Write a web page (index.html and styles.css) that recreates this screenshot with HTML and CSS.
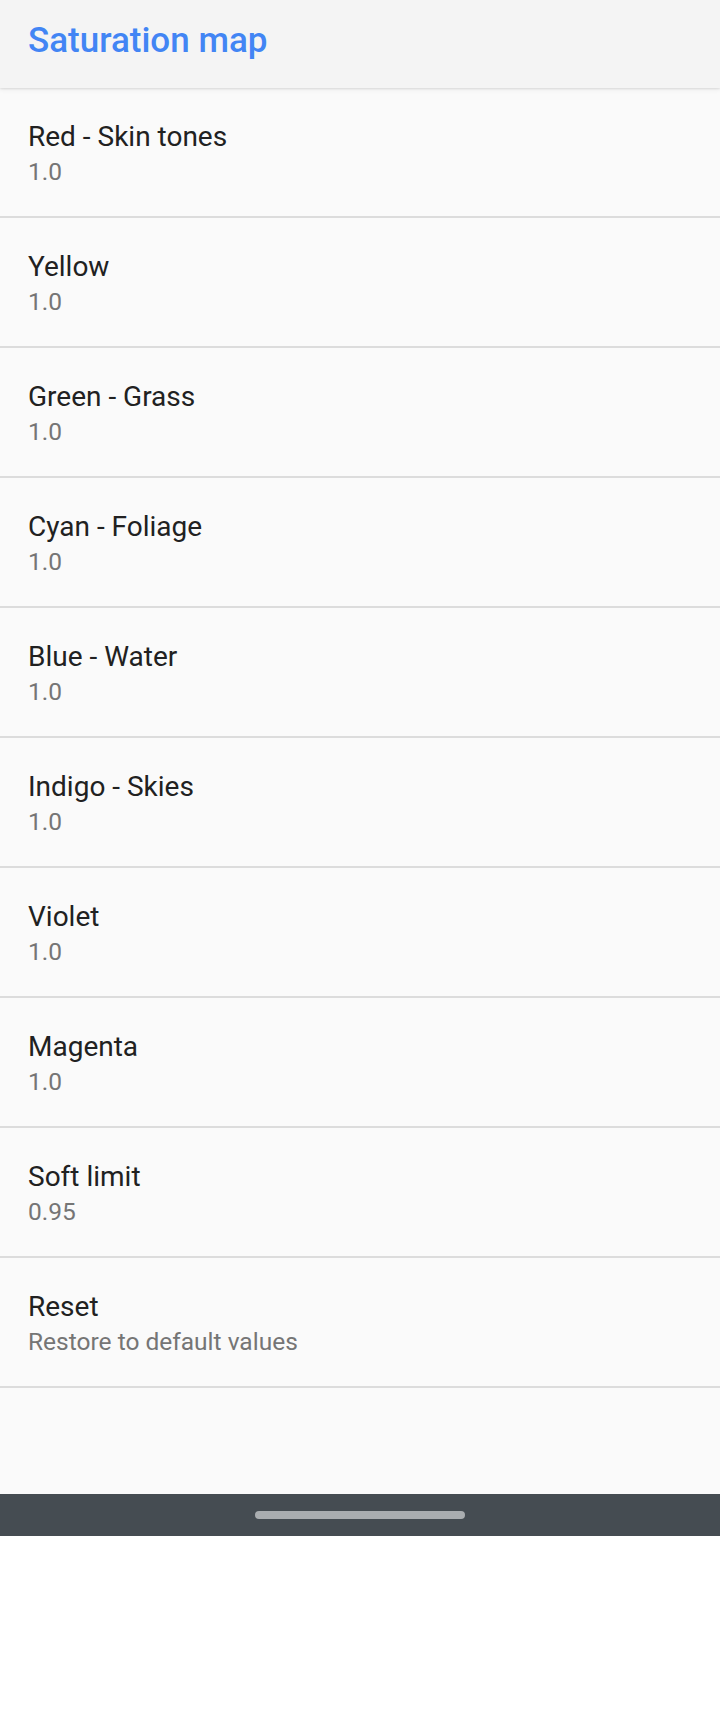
FILE: index.html
```html
<!DOCTYPE html>
<html>
<head>
<meta charset="utf-8">
<link rel="stylesheet" href="styles.css">
</head>
<body>
<div class="screen">
  <header class="appbar"><h1 class="appbar-title">Saturation map</h1></header>
  <main class="list">
    <div class="pref"><div class="pref-title">Red - Skin tones</div><div class="pref-summary">1.0</div></div>
    <div class="pref"><div class="pref-title">Yellow</div><div class="pref-summary">1.0</div></div>
    <div class="pref"><div class="pref-title">Green - Grass</div><div class="pref-summary">1.0</div></div>
    <div class="pref"><div class="pref-title">Cyan - Foliage</div><div class="pref-summary">1.0</div></div>
    <div class="pref"><div class="pref-title">Blue - Water</div><div class="pref-summary">1.0</div></div>
    <div class="pref"><div class="pref-title">Indigo - Skies</div><div class="pref-summary">1.0</div></div>
    <div class="pref"><div class="pref-title">Violet</div><div class="pref-summary">1.0</div></div>
    <div class="pref"><div class="pref-title">Magenta</div><div class="pref-summary">1.0</div></div>
    <div class="pref"><div class="pref-title">Soft limit</div><div class="pref-summary">0.95</div></div>
    <div class="pref"><div class="pref-title">Reset</div><div class="pref-summary">Restore to default values</div></div>
  </main>
  <nav class="navbar"><div class="nav-handle"></div></nav>
</div>
</body>
</html>
```
FILE: styles.css
```css
html, body {
  margin: 0;
  padding: 0;
  background: #ffffff;
}
body {
  width: 720px;
  height: 1712px;
  font-family: Roboto, "Noto Sans", sans-serif;
}
.screen {
  display: flex;
  flex-direction: column;
  height: 1536px;
  background: #fafafa;
}
.appbar {
  position: relative;
  z-index: 1;
  height: 88px;
  box-sizing: border-box;
  flex: none;
  background: #f4f4f4;
  padding: 20px 28px 0;
  box-shadow: 0 1px 2px rgba(0,0,0,0.10), 0 2px 5px rgba(0,0,0,0.05);
}
.appbar-title {
  margin: 0;
  font-size: 35px;
  line-height: 41px;
  font-weight: 500;
  color: #4285f4;
}
.list {
  flex: 1;
  display: flex;
  flex-direction: column;
}
.pref {
  height: 130px;
  box-sizing: border-box;
  padding: 30px 28px 0;
  border-bottom: 2px solid #dcdcdc;
}
.pref-title {
  font-size: 28px;
  line-height: 37px;
  color: #212121;
}
.pref-summary {
  font-size: 24.5px;
  line-height: 34px;
  color: #757575;
}
.navbar {
  flex: none;
  height: 42px;
  background: #454c52;
  display: flex;
  align-items: center;
  justify-content: center;
}
.nav-handle {
  width: 210px;
  height: 8px;
  border-radius: 4px;
  background: #a9adb0;
}
```
